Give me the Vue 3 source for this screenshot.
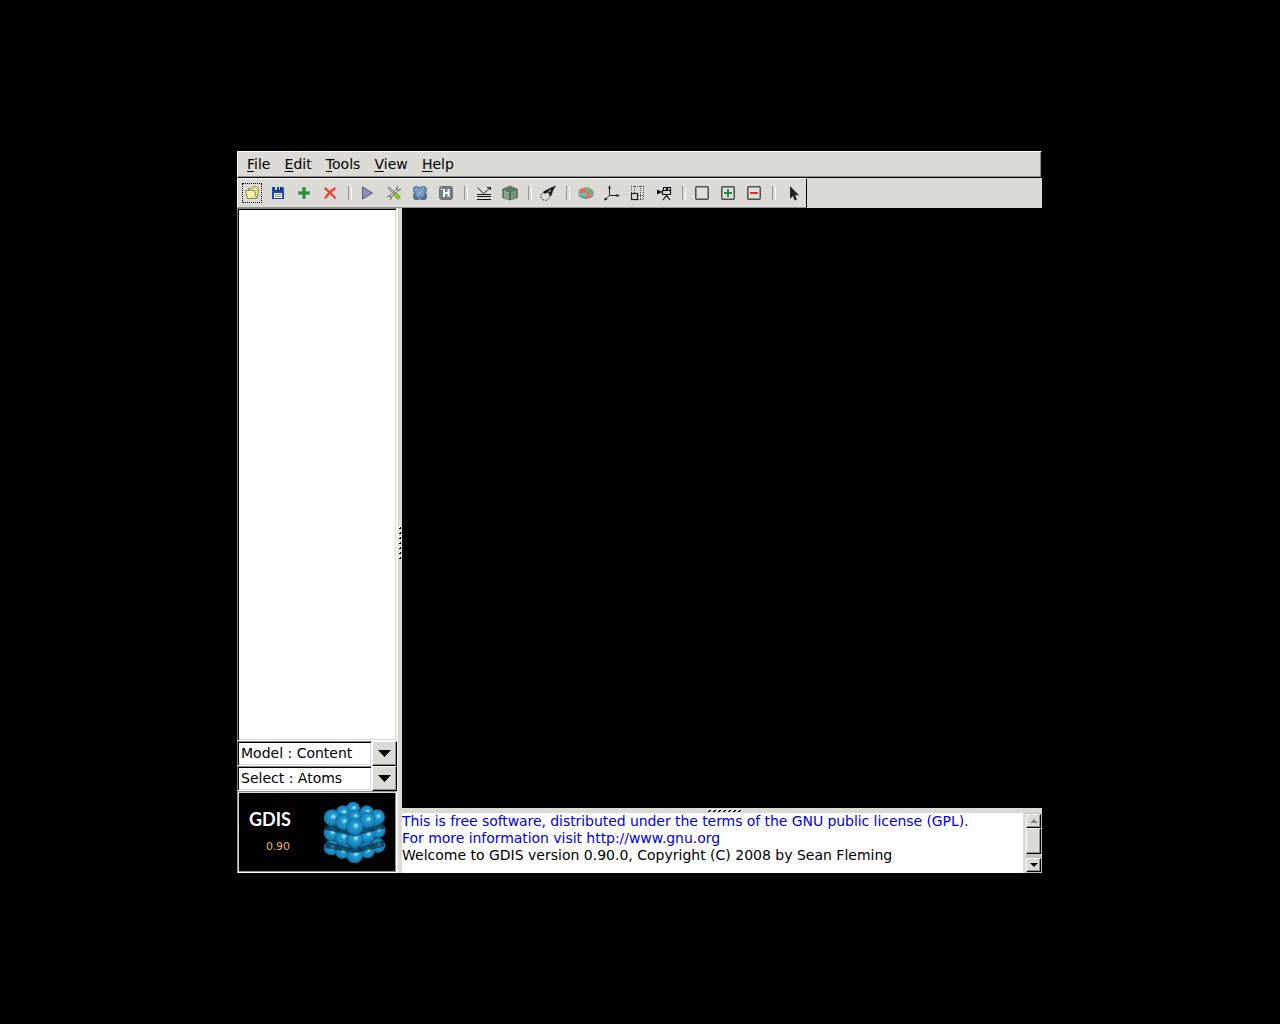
<script setup>
const menus = ['File', 'Edit', 'Tools', 'View', 'Help']
const tools = [
  'open', 'save', 'add', 'remove', '|',
  'play', 'tools', 'atoms', 'hydrogen', '|',
  'surface', 'cell', '|',
  'measure', '|',
  'pie', 'axes', 'region', 'camera', '|',
  'box', 'plus', 'minus', '|',
  'pointer'
]
const combos = ['Model : Content', 'Select : Atoms']

const layers = [
  { shade: 'M22 136L110 158L198 132V152L110 172L22 156Z', atoms: [[40, 155, 23], [75, 158, 20], [146, 160, 23], [180, 149, 22], [73, 167, 22], [148, 165, 22], [110, 177, 25]] },
  { shade: 'M22 84L110 106L198 82V98L110 120L22 102Z', atoms: [[40, 111, 23], [75, 115, 20], [180, 103, 23], [74, 124, 23], [148, 117, 24], [110, 130, 25]] },
  { shade: '', atoms: [[105, 38, 21], [75, 50, 22], [146, 49, 21], [110, 62, 21], [178, 63, 23], [42, 65, 25], [148, 72, 24], [76, 78, 24], [110, 92, 26]] }
]
const dots = [0, 1, 2, 3, 4, 5, 6]
</script>

<template>
  <div class="screen">
    <div class="window">
      <nav class="menubar">
        <span v-for="m in menus" :key="m" class="menu"><u>{{ m[0] }}</u>{{ m.slice(1) }}</span>
      </nav>
      <div class="toolrow">
        <div class="toolbar">
          <div v-for="(t, i) in tools" :key="i" :class="t === '|' ? 'sep' : ['tool', { focus: i === 0 }]">
            <svg v-if="t !== '|'" width="20" height="20" viewBox="0 0 20 20">
              <g v-if="t === 'open'" stroke="#8b8752" stroke-width="1">
                <path d="M6.500 14.500V5.500L9.500 5.500L12.500 3.500H14.500L16.500 5.500L15.500 14.500Z" fill="#e9e39a" />
                <path d="M3.500 7.500H12.500L14.500 15.500H5.500Z" fill="#f7f2a7" />
                <path d="M4.500 8.500H11.500" stroke="#fffde0" />
              </g>
              <g v-else-if="t === 'save'">
                <path d="M4 4H15L16 5V16H4Z" fill="#174bb0" />
                <rect x="6" y="4" width="8" height="4" fill="#0c2c76" />
                <rect x="7" y="4" width="5" height="3" fill="#d9e2f0" />
                <rect x="9" y="4" width="2" height="3" fill="#173e8e" />
                <rect x="6" y="10" width="8" height="5" fill="#fff" />
                <path d="M7 11.500H13M7 13.500H13" stroke="#849481" />
              </g>
              <path v-else-if="t === 'add'" d="M8.500 4.500H11.500V8.500H15.500V11.500H11.500V15.500H8.500V11.500H4.500V8.500H8.500Z" fill="#248a3c" stroke="#5aa267" stroke-width=".6" />
              <path v-else-if="t === 'remove'" d="M4.500 5Q9 8 15.500 15.500M15.500 5Q9 9 5 15.500" stroke="#ee4430" stroke-width="2.200" fill="none" />
              <path v-else-if="t === 'play'" d="M4.500 4L14.500 10L4.500 16Z" fill="#8a8fbd" stroke="#545977" />
              <g v-else-if="t === 'tools'" fill="none">
                <path d="M14.500 5.500L5.500 14.500" stroke="#5c635f" stroke-width="3" />
                <path d="M14.500 5.500L5.500 14.500" stroke="#e8ebe8" stroke-width="1.500" />
                <path d="M14 3L12.500 5.500L14.500 7.500L17 6M3 14L5.500 12.500L7.500 14.500L6 17" stroke="#5c635f" />
                <path d="M4 4L11 11" stroke="#666" stroke-width="2" />
                <path d="M4 4L10 10" stroke="#eee" stroke-width=".8" />
                <path d="M11 11L15.500 15.500" stroke="#6aa820" stroke-width="4.200" />
                <path d="M11 11L15 15" stroke="#8ad42c" stroke-width="2.200" />
              </g>
              <g v-else-if="t === 'atoms'" fill="#5f82ae">
                <circle cx="13.200" cy="6.800" r="3.900" />
                <circle cx="6.800" cy="7" r="3.900" />
                <circle cx="13.200" cy="13.200" r="3.900" fill="#4f6e96" />
                <circle cx="6.800" cy="13.200" r="3.900" fill="#547398" />
                <circle cx="10" cy="10" r="4.500" fill="#7899c0" />
                <path d="M5 7.500L7 5.500M12 6.500L14 4.500M8.500 11.500L12 8" stroke="#a0b9d6" stroke-width="1.600" />
              </g>
              <g v-else-if="t === 'hydrogen'">
                <rect x="3.500" y="3.500" width="13" height="13" rx="2" fill="#6f7f84" stroke="#66767b" />
                <path d="M8 6V14M12.500 6V14M8 10H12.500" stroke="#fff" stroke-width="2" />
                <path d="M5.500 5V7" stroke="#fff" />
              </g>
              <g v-else-if="t === 'surface'" stroke="#111" fill="none">
                <path d="M3 11.500H17M3 13.500H17M3 16.500H17" />
                <path d="M3.500 4.500L9.500 10.500L16 5" stroke-width=".9" />
                <path d="M13 4.500H16.500V7" />
              </g>
              <g v-else-if="t === 'cell'" stroke="#4b6250" stroke-width=".7">
                <path d="M3 6L10 3L17 6L10 9Z" fill="#5f7a64" />
                <path d="M3 6L10 9V17L3 15Z" fill="#8caa90" />
                <path d="M17 6L10 9V17L17 15Z" fill="#7b9a80" />
                <path d="M3 6V15M17 6V15M10 9V17" stroke="#2d3c30" />
                <path d="M6.500 8V15M13.500 8V15" stroke-dasharray="1 1.500" />
              </g>
              <g v-else-if="t === 'measure'" fill="none" stroke="#111">
                <path d="M17.500 3L13 5L6 8.500V10.500L10.500 9L12 13L13 12.500L15 7Z" fill="#111" stroke-width=".6" />
                <path d="M13.500 6L10 8.500L12.300 9.300Z" fill="#aaa" stroke="none" />
                <path d="M6 9A4.300 4.300 0 1 0 11.500 13" stroke-dasharray="1.500 1.500" />
              </g>
              <g v-else-if="t === 'pie'">
                <ellipse cx="10" cy="11" rx="7.500" ry="5" fill="#628d8a" />
                <ellipse cx="10" cy="9.500" rx="7.500" ry="5" fill="#68bdb5" />
                <path d="M10 9.500L2.600 10A7.500 5 0 0 1 10 4.500Z" fill="#ec6a5c" />
                <path d="M10 9.500L10 4.500A7.500 5 0 0 1 16 6.500Z" fill="#79b06c" />
                <path d="M10 9.500L16 6.500A7.500 5 0 0 1 17 11Z" fill="#5fb68c" />
                <path d="M10 9.500L17 11A7.500 5 0 0 1 11 15Z" fill="#e8705f" />
              </g>
              <g v-else-if="t === 'axes'" stroke="#222" fill="#222">
                <path d="M7.500 5V12.500H15M7.500 12.500L4 16" fill="none" />
                <path d="M7.500 2L9 5.500H6ZM18 12.500L14.500 11V14ZM2 17.500L3 14.500L5.500 16.500Z" stroke="none" />
              </g>
              <g v-else-if="t === 'region'" fill="none" stroke="#222">
                <path d="M3 3.500H16M10 12.500H16M10 16.500H16M3.500 3V10M6.500 3V10M12.500 3V17M15.500 3V17" stroke-dasharray="1 1" opacity=".75" />
                <rect x="3.500" y="10.500" width="6" height="6" stroke-width="1.200" />
              </g>
              <g v-else-if="t === 'camera'" transform="translate(1 1)" fill="none" stroke="#111" stroke-width="1.200">
                <path d="M8.500 3.500H11.500V6.500H8.500ZM12.500 3.500H15.500V6.500H12.500ZM7.500 6.500H15.500V10.500H7.500Z" />
                <path d="M2 5.500V10.500L7.500 8Z" fill="#111" stroke="none" />
                <path d="M11.500 11V13M11 12L8 16M12 12L15 16" />
              </g>
              <g v-else-if="['box', 'plus', 'minus'].includes(t)">
                <rect x="3.750" y="3.750" width="12.500" height="12.500" rx="1" fill="#dedfdb" stroke="#4e504e" stroke-width="1.500" />
                <path v-if="t === 'plus'" d="M10 6V14M6 10H14" stroke="#248c4b" stroke-width="2" />
                <path v-if="t === 'minus'" d="M6 10H14" stroke="#e1302b" stroke-width="2" />
              </g>
              <path v-else d="M8 3V16L10.700 13L12.700 17.500L15 16.500L13 12.200H17Z" fill="#222" />
            </svg>
          </div>
        </div>
      </div>
      <div class="main">
        <aside class="left">
          <div class="tree"></div>
          <div v-for="c in combos" :key="c" class="combo">
            <div class="entry">{{ c }}</div>
            <div class="drop">
              <svg width="13" height="7" viewBox="0 0 13 7"><path d="M0 0H13L6.500 7Z" /></svg>
            </div>
          </div>
          <div class="logo">
            <div class="brand">
              <div class="name">GDIS</div>
              <div class="version">0.90</div>
            </div>
            <svg class="crystal" width="72" height="72" viewBox="0 0 216 216">
              <defs>
                <radialGradient id="ball" cx=".5" cy=".5" r=".52" fx=".6" fy=".42">
                  <stop offset="0" stop-color="#d5fbff" />
                  <stop offset=".14" stop-color="#7ad4f2" />
                  <stop offset=".34" stop-color="#229bd2" />
                  <stop offset=".8" stop-color="#1583ba" />
                  <stop offset="1" stop-color="#0c5a86" />
                </radialGradient>
              </defs>
              <path d="M26 75L110 95L192 75V155L110 180L26 155Z" fill="#06304a" />
              <g v-for="(l, n) in layers" :key="n">
                <circle v-for="(a, i) in l.atoms" :key="i" :cx="a[0]" :cy="a[1]" :r="a[2]" fill="url(#ball)" />
                <path v-if="l.shade" :d="l.shade" fill="#031b2b" opacity=".6" />
              </g>
            </svg>
          </div>
        </aside>
        <div class="grip vertical">
          <svg width="3" height="33" viewBox="0 0 3 33">
            <g v-for="d in dots" :key="d">
              <path :d="`M0 ${d * 5 + 2}h1v-1h1v2h-2z`" fill="#000" />
              <path :d="`M0 ${d * 5}h2v1h-1v1h-1z`" fill="#fff" />
            </g>
          </svg>
        </div>
        <section class="right">
          <div class="canvas"></div>
          <div class="grip horizontal">
            <svg width="33" height="3" viewBox="0 0 33 3">
              <g v-for="d in dots" :key="d">
                <path :d="`M${d * 5} 2h1v-1h2v1h-1v1h-2z`" fill="#000" />
                <path :d="`M${d * 5} 0h2v1h-1v1h-1z`" fill="#fff" />
              </g>
            </svg>
          </div>
          <div class="bottom">
            <div class="log">
              <div class="blue license">This is free software, distributed under the terms of the GNU public license (GPL).</div>
              <div class="blue visit">For more information visit http://www.gnu.org</div>
              <div>Welcome to GDIS version 0.90.0, Copyright (C) 2008 by Sean Fleming</div>
            </div>
            <div class="scroll">
              <div class="sbtn up"><svg width="8" height="4" viewBox="0 0 8 4"><path d="M0 4H8L4 0Z" fill="#858581" /></svg></div>
              <div class="sbtn thumb"></div>
              <div class="trough"></div>
              <div class="sbtn down"><svg width="8" height="4" viewBox="0 0 8 4"><path d="M0 0H8L4 4Z" /></svg></div>
            </div>
          </div>
        </section>
      </div>
    </div>
  </div>
</template>

<style>
body { background: #000; }
</style>

<style scoped>
* { box-sizing: border-box; }
svg { display: block; flex: none; }
.screen {
  height: 1024px;
  padding: 151px 0 0 237px;
  background: #000;
  color: #000;
  font: 14px/17px "DejaVu Sans", sans-serif;
  overflow: hidden;
}
.window { width: 805px; height: 722px; display: flex; flex-direction: column; background: #dbdad5; }
.menubar {
  display: flex;
  gap: 14.15px;
  width: 805px;
  height: 27px;
  padding: 4px 0 0 9px;
  border: 1px solid #fff;
  border-right-color: #000;
  border-bottom-color: #000;
  box-shadow: inset -1px -1px #92918d;
}
.menu u { text-decoration: underline; text-decoration-thickness: 1px; text-underline-offset: 2px; }
.toolrow { display: flex; height: 30px; }
.toolbar {
  display: flex;
  align-items: center;
  width: 570px;
  height: 30px;
  padding-left: 1px;
  border: 1px solid #fff;
  border-right-color: #000;
  border-bottom-color: #92918d;
}
.tool { display: flex; align-items: center; justify-content: center; width: 26px; height: 26px; }
.focus svg { outline: 1px dotted #000; outline-offset: -1px; }
.sep { width: 12px; height: 14px; padding-left: 5px; }
.sep::before { content: ""; display: block; width: 2px; height: 14px; border-left: 1px solid #999894; border-right: 1px solid #fff; }
.main { display: flex; height: 665px; }
.left { display: flex; flex-direction: column; width: 160px; }
.tree {
  height: 533px;
  background: #fff;
  border: 1px solid #858480;
  border-right-color: #fff;
  border-bottom-color: #fff;
  box-shadow: inset 1px 1px #000, inset -1px -1px #dbdad5;
}
.combo { display: flex; height: 25px; }
.entry {
  width: 135px;
  padding: 3px 0 0 3px;
  background: #fff;
  border: 1px solid #858480;
  border-right-color: #fff;
  border-bottom-color: #fff;
  box-shadow: inset 1px 1px #000, inset -1px -1px #dbdad5;
}
.drop {
  display: flex;
  align-items: center;
  justify-content: center;
  width: 25px;
  padding: 0 1px 1px 0;
  border: 1px solid #fff;
  border-right-color: #000;
  border-bottom-color: #000;
  box-shadow: inset -1px -1px #92918d;
}
.logo {
  display: flex;
  height: 82px;
  background: #000;
  border: 1px solid #92918d;
  border-right-color: #fff;
  border-bottom-color: #fff;
  box-shadow: inset 1px 1px #dbdad5, inset -1px -1px #92918d;
}
.brand { width: 80px; padding: 17px 0 0 11px; }
.name { color: #fff; font: 700 18px/20px Lato, sans-serif; }
.version { margin: 11px 0 0 17px; color: #efb86d; font-size: 11px; line-height: 13px; letter-spacing: -.2px; }
.crystal { margin-top: 4px; }
.grip { display: flex; flex: none; }
.vertical { width: 5px; padding: 318px 0 0 1px; border-left: 1px solid #f5f5f3; }
.horizontal { height: 5px; padding: 1px 0 0 306px; }
.right { display: flex; flex-direction: column; width: 640px; }
.canvas { height: 600px; background: #000; }
.bottom { display: flex; height: 60px; }
.log { width: 621px; background: #fff; white-space: nowrap; }
.blue { color: #0000e6; }
.license { letter-spacing: -.064px; }
.visit { letter-spacing: -.045px; }
.scroll { display: flex; flex-direction: column; width: 16px; height: 60px; margin-left: 3px; padding: 1px 1px 1px 0; background: #c4c3bd; }
.sbtn {
  display: flex;
  align-items: center;
  justify-content: center;
  height: 14px;
  background: #dbdad5;
  border: 1px solid #fff;
  border-right-color: #000;
  border-bottom-color: #000;
  box-shadow: inset -1px -1px #92918d;
}
.thumb { height: 26px; }
.trough { flex: 1; }
</style>
